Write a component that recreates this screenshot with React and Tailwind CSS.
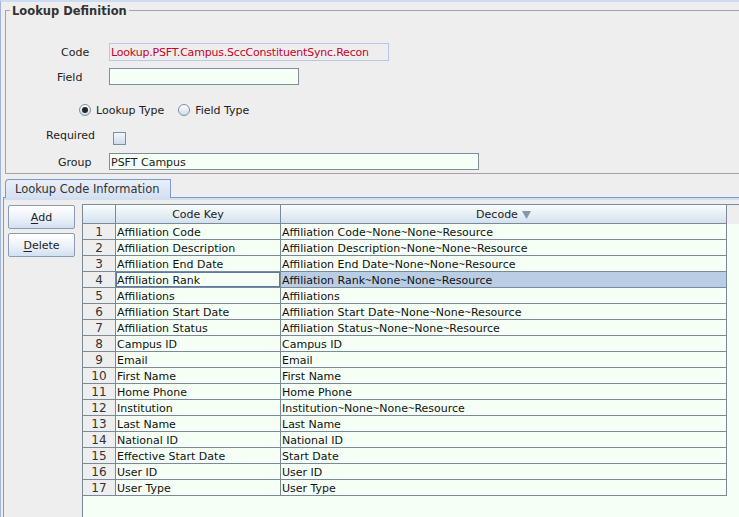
import React from 'react';

const rows = [
  ['Affiliation Code', 'Affiliation Code~None~None~Resource'],
  ['Affiliation Description', 'Affiliation Description~None~None~Resource'],
  ['Affiliation End Date', 'Affiliation End Date~None~None~Resource'],
  ['Affiliation Rank', 'Affiliation Rank~None~None~Resource'],
  ['Affiliations', 'Affiliations'],
  ['Affiliation Start Date', 'Affiliation Start Date~None~None~Resource'],
  ['Affiliation Status', 'Affiliation Status~None~None~Resource'],
  ['Campus ID', 'Campus ID'],
  ['Email', 'Email'],
  ['First Name', 'First Name'],
  ['Home Phone', 'Home Phone'],
  ['Institution', 'Institution~None~None~Resource'],
  ['Last Name', 'Last Name'],
  ['National ID', 'National ID'],
  ['Effective Start Date', 'Start Date'],
  ['User ID', 'User ID'],
  ['User Type', 'User Type'],
];

// 4th row is the selected one
const SELECTED = 3;

// the tilde in DejaVu is much wider than the one in the screenshot
const withTildes = (s) =>
  s.split('~').map((part, i) => (
    <React.Fragment key={i}>
      {i > 0 && <span className="font-['Liberation_Sans',sans-serif]">~</span>}
      {part}
    </React.Fragment>
  ));

const Radio = ({ checked }) => (
  <span className="w-[12px] h-[12px] rounded-full border border-[#7d8ea3] bg-linear-to-b from-white to-[#d0dced] flex items-center justify-center">
    {checked && <span className="w-[6px] h-[6px] rounded-full bg-[#262626]" />}
  </span>
);

const SwingButton = ({ mnemonic, rest }) => (
  <button className="w-[67px] h-[24px] border border-[#8a9bb2] rounded-[2px] bg-linear-to-b from-white via-[#eef3f9] to-[#d3e0f0] text-[11px] text-[#222] leading-none">
    <span className="underline underline-offset-2">{mnemonic}</span>
    {rest}
  </button>
);

const SortDown = () => (
  <svg width="9" height="8" viewBox="0 0 9 8">
    <polygon points="0,0 9,0 4.5,8" fill="#8596aa" />
  </svg>
);

const headCell = 'border-r border-b border-[#7b8a99] bg-linear-to-b from-[#fafdfb] to-[#d3e1ef]';

export default function App() {
  return (
    <div className="w-[739px] h-[517px] overflow-hidden bg-[#eeeeee] border-t-2 border-t-[#cddcf1] border-l border-l-[#9fb4d6] flex flex-col font-['DejaVu_Sans',sans-serif] text-[#222]">
      {/* Lookup Definition */}
      <fieldset className="mt-[1px] ml-[4px] w-[760px] border border-[#a4a4a4] pb-[3px] shrink-0">
        <legend className="ml-[4px] px-[2px] h-[14px] text-[11.5px] font-bold leading-[16px] text-[#333]">
          Lookup Definition
        </legend>

        <div className="mt-[26px] flex items-start h-[18px]">
          <div className="w-[103px] pl-[55px] text-[11px] leading-[20px]">Code</div>
          <div className="w-[280px] h-[18px] border border-[#b4c9e3] px-[1px] text-[11px] leading-[18px] tracking-[-0.2px] text-[#c8002a]">
            Lookup.PSFT.Campus.SccConstituentSync.Recon
          </div>
        </div>

        <div className="mt-[7px] flex items-start h-[17px]">
          <div className="w-[103px] pl-[51px] text-[11px] leading-[19px]">Field</div>
          <div className="w-[190px] h-[17px] border border-[#7f8e99] bg-[#f5fff5]" />
        </div>

        <div className="mt-[17px] flex items-center h-[16px] pl-[73px] text-[11px]">
          <Radio checked />
          <span className="ml-[5px] leading-[18px] h-[16px]">Lookup Type</span>
          <span className="ml-[14px]"><Radio /></span>
          <span className="ml-[5px] leading-[18px] h-[16px]">Field Type</span>
        </div>

        <div className="mt-[9px] flex items-start h-[18px]">
          <div className="w-[103px] pl-[40px] text-[11px] leading-[18px]">Required</div>
          <span className="mt-[5px] ml-[4px] w-[13px] h-[13px] border border-[#7d8ea3] bg-linear-to-b from-[#f2f6fb] to-[#cfdcec]" />
        </div>

        <div className="mt-[8px] flex items-start h-[17px]">
          <div className="w-[103px] pl-[52px] text-[11px] leading-[19px]">Group</div>
          <div className="w-[370px] h-[17px] border border-[#7f8e99] bg-[#f5fff5] px-[1px] text-[11px] leading-[17px]">
            PSFT Campus
          </div>
        </div>
      </fieldset>

      {/* Tabbed pane */}
      <div className="mt-[5px] ml-[2px] flex-1 flex flex-col min-h-0">
        <div className="flex h-[19px] shrink-0">
          <div className="w-[2px] border-b border-[#7b9bc9]" />
          <div className="w-[166px] h-[19px] border border-b-0 border-[#7b9bc9] rounded-tl-[4px] bg-linear-to-b from-[#e8eff8] to-[#d4e1f1] pl-[9px] text-[11.5px] leading-[19px] text-[#333]">
            Lookup Code Information
          </div>
          <div className="flex-1 border-b border-[#7b9bc9]" />
        </div>

        <div className="flex-1 flex flex-col border-l border-[#7b9bc9] min-h-0">
          <div className="h-[2px] bg-[#d3dff0] shrink-0" />
          <div className="flex-1 flex min-h-0">
            {/* buttons */}
            <div className="w-[78px] pl-[4px] pt-[5px] flex flex-col gap-[4px] shrink-0">
              <SwingButton mnemonic="A" rest="dd" />
              <SwingButton mnemonic="D" rest="elete" />
            </div>

            {/* table */}
            <div className="mt-[4px] flex-1 flex flex-col border-l border-t border-[#7b8a99] min-w-0">
              <div className="flex h-[19px] shrink-0 bg-[#eeeeee] text-[11px]">
                <div className={`w-[33px] ${headCell}`} />
                <div className={`w-[165px] ${headCell} text-center leading-[20px]`}>Code Key</div>
                <div className={`w-[446px] ${headCell} flex items-center justify-center gap-[4px] pt-[2px]`}>
                  <span>Decode</span>
                  <SortDown />
                </div>
              </div>
              <div className="flex-1 bg-[#f5fff5]">
                {rows.map(([key, decode], i) => (
                  <div key={key} className="flex h-[16px] text-[11px] leading-[17px] text-[#111]">
                    <div className="w-[33px] border-r border-b border-[#7b8a99] bg-[#eeeeee] text-center text-[12px] text-[#333]">
                      {i + 1}
                    </div>
                    <div
                      className={`w-[165px] border-r border-b border-[#7b8a99] pl-[1px] whitespace-nowrap overflow-hidden ${
                        i === SELECTED ? 'shadow-[inset_0_0_0_1px_#5c7aa3]' : ''
                      }`}
                    >
                      {key}
                    </div>
                    <div
                      className={`w-[446px] border-r border-b border-[#7b8a99] pl-[1px] whitespace-nowrap overflow-hidden ${
                        i === SELECTED ? 'bg-[#b9cde5]' : ''
                      }`}
                    >
                      {withTildes(decode)}
                    </div>
                  </div>
                ))}
              </div>
            </div>
          </div>
        </div>
      </div>
    </div>
  );
}
